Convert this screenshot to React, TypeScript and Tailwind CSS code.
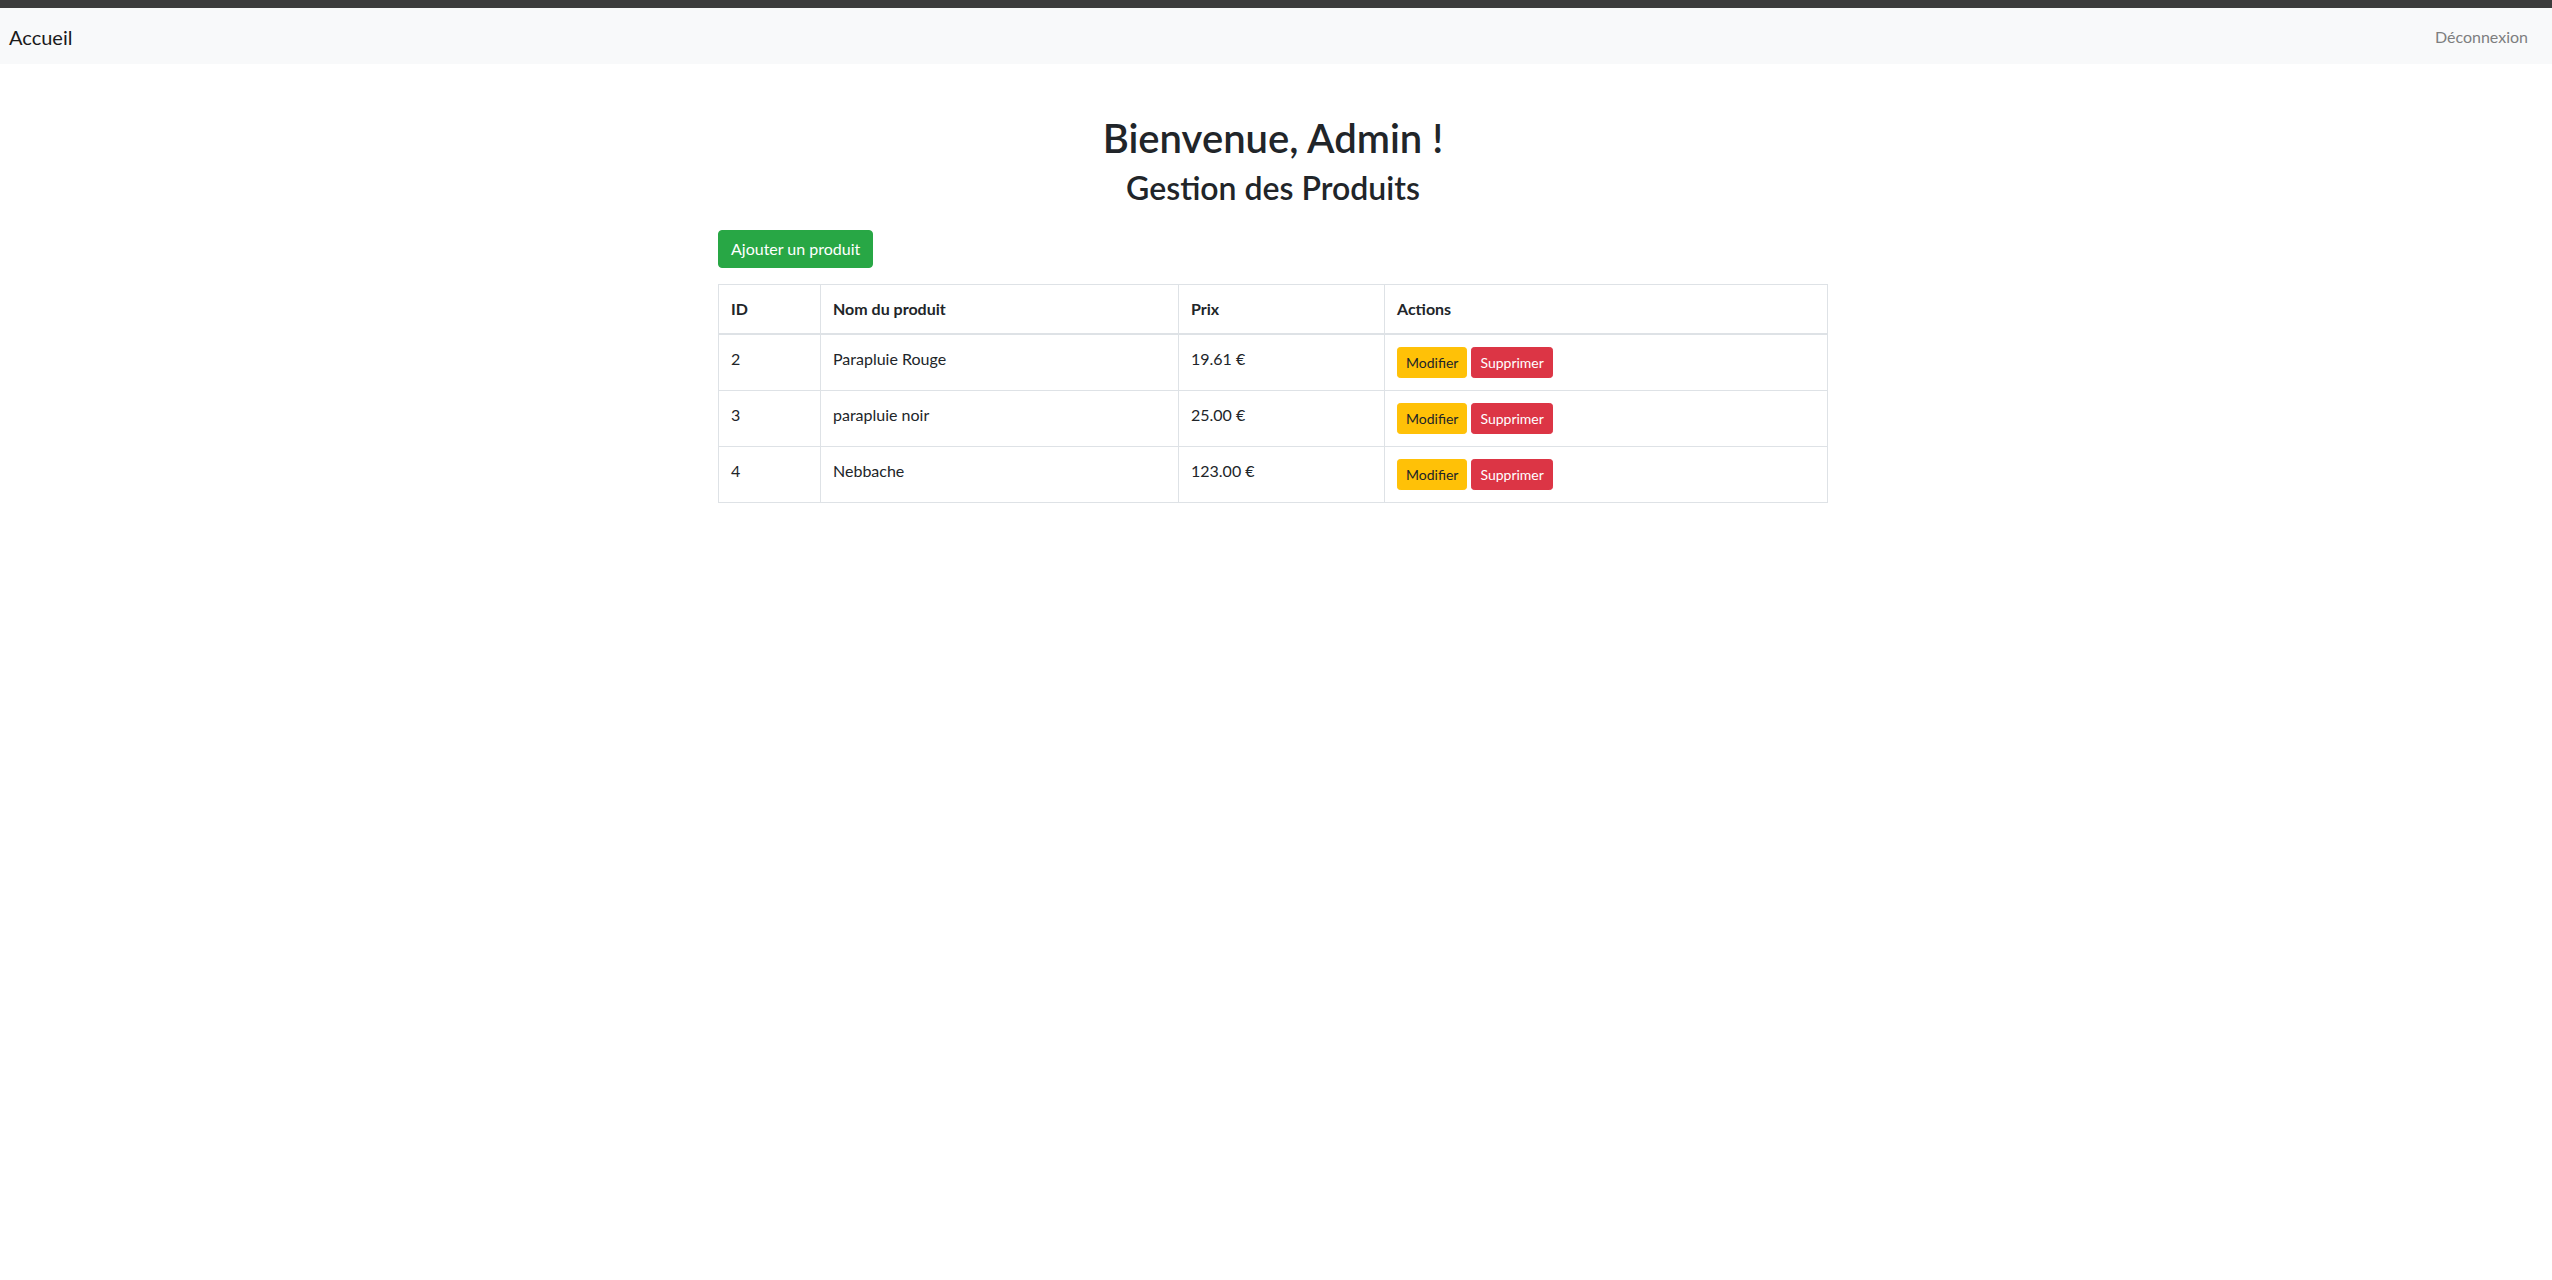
const products = [
  { id: 2, name: "Parapluie Rouge", price: "19.61 €" },
  { id: 3, name: "parapluie noir", price: "25.00 €" },
  { id: 4, name: "Nebbache", price: "123.00 €" },
];

function Navbar() {
  return (
    <nav className="flex h-[56px] items-center justify-between bg-[#f8f9fa] pl-[9px] pr-[24px] pt-[2px]">
      <a href="#" className="text-[20px] leading-[30px] text-[#1a1a1a]">
        Accueil
      </a>
      <a href="#" className="text-[16px] leading-6 text-[#7d7e7f]">
        Déconnexion
      </a>
    </nav>
  );
}

function ProductRow({ id, name, price }: { id: number; name: string; price: string }) {
  return (
    <tr>
      <td className="border border-[#dee2e6] p-3 align-top">{id}</td>
      <td className="border border-[#dee2e6] p-3 align-top">{name}</td>
      <td className="border border-[#dee2e6] p-3 align-top">{price}</td>
      <td className="border border-[#dee2e6] p-3 align-top">
        <div className="flex gap-[4px]">
          <button className="rounded-[3.2px] border border-[#ffc107] bg-[#ffc107] px-2 py-1 text-[14px] leading-[21px] text-[#212529]">
            Modifier
          </button>
          <button className="rounded-[3.2px] border border-[#dc3545] bg-[#dc3545] px-2 py-1 text-[14px] leading-[21px] text-white">
            Supprimer
          </button>
        </div>
      </td>
    </tr>
  );
}

export default function App() {
  return (
    <div className="min-h-screen bg-white font-['Lato','Segoe_UI',sans-serif] text-[16px] leading-6 text-[#212529]">
      <div className="h-[8px] bg-[#3c3c3c]" />
      <Navbar />

      <div className="pr-[6px]">
        <main className="mx-auto mt-12 w-[1110px]">
          <h1 className="mb-[6px] pt-[2px] text-center text-[40px] font-semibold leading-[48px]">
            Bienvenue, Admin !
          </h1>
          <h2 className="mb-[23px] pt-[1px] text-center text-[32px] font-semibold leading-[38.4px]">
            Gestion des Produits
          </h2>

          <button className="mb-4 rounded-[4px] border border-[#28a745] bg-[#28a745] px-3 py-[6px] text-[16px] leading-6 text-white">
            Ajouter un produit
          </button>

          <table className="w-full table-fixed border border-[#dee2e6] text-left">
            <thead>
              <tr>
                <th className="w-[102px] border border-b-2 border-[#dee2e6] p-3 font-bold">ID</th>
                <th className="w-[358px] border border-b-2 border-[#dee2e6] p-3 font-bold">Nom du produit</th>
                <th className="w-[206px] border border-b-2 border-[#dee2e6] p-3 font-bold">Prix</th>
                <th className="border border-b-2 border-[#dee2e6] p-3 font-bold">Actions</th>
              </tr>
            </thead>
            <tbody>
              {products.map((p) => (
                <ProductRow key={p.id} {...p} />
              ))}
            </tbody>
          </table>
        </main>
      </div>
    </div>
  );
}
